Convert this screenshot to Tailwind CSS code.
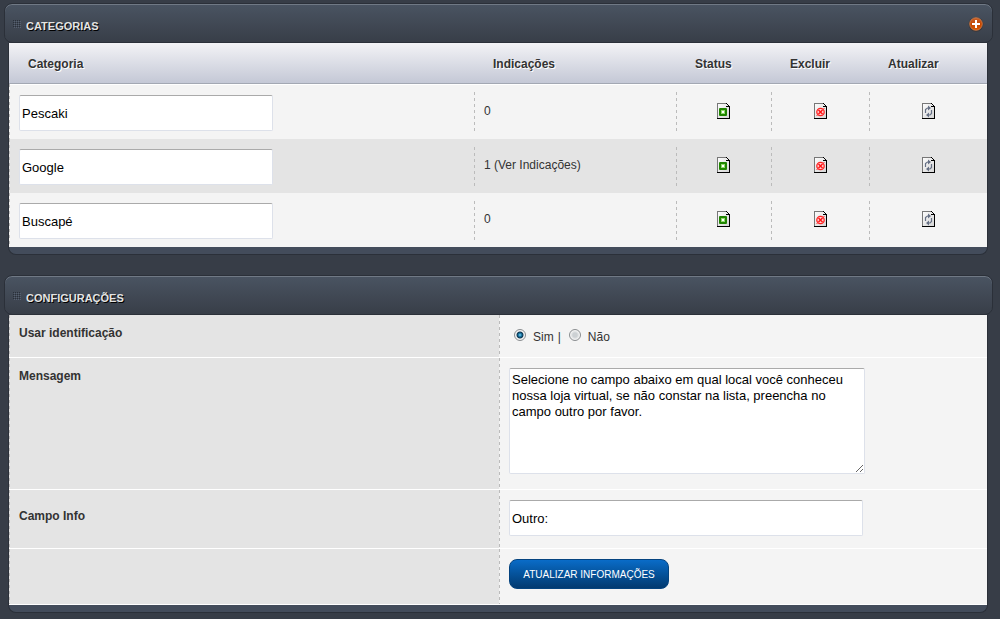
<!DOCTYPE html>
<html lang="pt-BR">
<head>
<meta charset="utf-8">
<meta name="viewport" content="width=device-width, initial-scale=1">
<title>Categorias</title>
<script src="https://cdn.jsdelivr.net/npm/@tailwindcss/browser@4"></script>
</head>
<body class="min-h-screen bg-[#373d47] pt-[3px] pr-[7px] pl-1 font-['Liberation_Sans',Arial,sans-serif] text-xs text-[#333]">

<svg class="absolute h-0 w-0" aria-hidden="true">
  <defs>
    <linearGradient id="paper" x1="0" y1="0" x2="1" y2="1"><stop offset="0" stop-color="#fff"/><stop offset="1" stop-color="#d2d2d2"/></linearGradient>
    <linearGradient id="orange" x1="0" y1="0" x2="0" y2="1"><stop offset="0" stop-color="#c8622c"/><stop offset="0.5" stop-color="#c44500"/><stop offset="1" stop-color="#d85800"/></linearGradient>
    <pattern id="dots" width="2" height="2" patternUnits="userSpaceOnUse"><rect width="1" height="1" fill="#2a303a"/><rect x="1" y="1" width="1" height="1" fill="#566070"/></pattern>
    <symbol id="page" viewBox="0 0 13 16">
      <path d="M0 0h10v1h1v1h1v1h1v13H0z" fill="url(#paper)"/>
      <path d="M0 0h9v1H1v14H0z" fill="#777"/>
      <path d="M0 15h13v1H0zM12 3h1v13h-1zM9 0h1v1H9zM10 1h1v1h-1zM11 2h1v1h-1zM9 3h3v1H9z" fill="#000"/>
    </symbol>
    <symbol id="status" viewBox="0 0 13 16">
      <use href="#page" width="13" height="16"/>
      <rect x="2" y="5" width="8" height="8" rx="1" fill="#1f8500"/>
      <rect x="4" y="7" width="4" height="4" fill="#8fd96a"/>
      <rect x="5" y="8" width="2" height="2" fill="#fff"/>
    </symbol>
    <symbol id="remove" viewBox="0 0 13 16">
      <use href="#page" width="13" height="16"/>
      <circle cx="6.500" cy="9" r="3.700" fill="#ffdada" stroke="#f22" stroke-width="1.300"/>
      <path d="M4.500 7l4 4M8.500 7l-4 4" stroke="#f11" stroke-width="1.500"/>
      <path d="M2.500 13l1.500-1.500M9 6.500L10.500 5" stroke="#f33"/>
    </symbol>
    <symbol id="refresh" viewBox="0 0 13 16">
      <use href="#page" width="13" height="16"/>
      <path d="M3.500 10V6.500l2-1.500H7M9.500 7v3.500L8 12H6" fill="none" stroke="#667085" stroke-width="1.200"/>
      <path d="M6 2.500L9 5 6 7.500zM7 9.500L4 12l3 2.500z" fill="#667085"/>
    </symbol>
  </defs>
</svg>

<section>
  <header class="flex h-10 items-center justify-between rounded-lg border border-[#2b3039] bg-linear-to-b from-[#4a5462] to-[#383e48] pt-px pr-2 pl-2 shadow-[inset_0_1px_0_#707985]">
    <div class="flex items-center gap-[5px]">
      <svg class="h-2 w-2" aria-hidden="true"><rect width="8" height="8" fill="url(#dots)"/></svg>
      <h2 class="pt-1.5 text-[11px] font-bold text-[#e4e4e4] [text-shadow:1px_1px_0_#000]">CATEGORIAS</h2>
    </div>
    <button type="button" aria-label="Adicionar categoria">
      <svg class="h-4 w-4" viewBox="0 0 16 16"><circle cx="8" cy="8.500" r="7.300" fill="#3a3638"/><circle cx="8" cy="8" r="6.300" fill="url(#orange)" stroke="#d98a58" stroke-width="0.700"/><path d="M8 4v8M4 8h8" stroke="#fff" stroke-width="2"/></svg>
    </button>
  </header>

  <div class="mr-[5px] ml-1 rounded-b-lg border border-t-0 border-[#2b3039] bg-[#434c5b] pb-[7px]">
    <table class="w-full table-fixed border-separate border-spacing-0">
      <colgroup><col><col class="w-[202px]"><col class="w-[95px]"><col class="w-[98px]"><col class="w-[118px]"></colgroup>
      <thead class="bg-linear-to-b from-[#f3f3f6] to-[#c3c7d5]">
        <tr class="h-[41px] text-left [text-shadow:1px_1px_0_#fff] *:border-b *:border-[#a3a8b3] *:pt-0.5 *:pl-[19px] *:font-bold">
          <th scope="col">Categoria</th><th scope="col">Indicações</th><th scope="col">Status</th><th scope="col">Excluir</th><th scope="col">Atualizar</th>
        </tr>
      </thead>
      <tbody>
        <tr class="h-[55px] bg-[#f4f4f4] shadow-[inset_0_1px_0_#fff] *:pb-px">
          <td class="bg-[repeating-linear-gradient(to_bottom,#bbb_0_3px,transparent_3px_6px)] bg-size-[1px_100%] bg-no-repeat pt-1 pl-2.5"><input aria-label="Categoria 1" type="text" value="Pescaki" class="block h-9 w-[254px] rounded-xs border border-[#dde1ea] border-t-[#aaa] bg-white px-0.5 pt-px text-[13px] text-black"></td>
          <td class="bg-[repeating-linear-gradient(to_bottom,#bbb_0_3px,transparent_3px_6px)] bg-size-[1px_39px] bg-no-repeat [background-position:left_center] pl-2.5">0</td>
          <td class="bg-[repeating-linear-gradient(to_bottom,#bbb_0_3px,transparent_3px_6px)] bg-size-[1px_39px] bg-no-repeat [background-position:left_center]"><button type="button" aria-label="Status" class="mx-auto block"><svg class="h-4 w-[13px]"><use href="#status"/></svg></button></td>
          <td class="bg-[repeating-linear-gradient(to_bottom,#bbb_0_3px,transparent_3px_6px)] bg-size-[1px_39px] bg-no-repeat [background-position:left_center]"><button type="button" aria-label="Excluir" class="mx-auto block"><svg class="h-4 w-[13px]"><use href="#remove"/></svg></button></td>
          <td class="bg-[repeating-linear-gradient(to_bottom,#bbb_0_3px,transparent_3px_6px)] bg-size-[1px_39px] bg-no-repeat [background-position:left_center]"><button type="button" aria-label="Atualizar" class="mx-auto block"><svg class="h-4 w-[13px]"><use href="#refresh"/></svg></button></td>
        </tr>
        <tr class="h-[54px] bg-[#e4e4e4] *:pb-0.5">
          <td class="bg-[repeating-linear-gradient(to_bottom,#bbb_0_3px,transparent_3px_6px)] bg-size-[1px_100%] bg-no-repeat pt-1 pl-2.5"><input aria-label="Categoria 2" type="text" value="Google" class="block h-9 w-[254px] rounded-xs border border-[#dde1ea] border-t-[#aaa] bg-white px-0.5 pt-px text-[13px] text-black"></td>
          <td class="bg-[repeating-linear-gradient(to_bottom,#bbb_0_3px,transparent_3px_6px)] bg-size-[1px_39px] bg-no-repeat [background-position:left_center] pl-2.5">1 <a href="#">(Ver Indicações)</a></td>
          <td class="bg-[repeating-linear-gradient(to_bottom,#bbb_0_3px,transparent_3px_6px)] bg-size-[1px_39px] bg-no-repeat [background-position:left_center]"><button type="button" aria-label="Status" class="mx-auto block"><svg class="h-4 w-[13px]"><use href="#status"/></svg></button></td>
          <td class="bg-[repeating-linear-gradient(to_bottom,#bbb_0_3px,transparent_3px_6px)] bg-size-[1px_39px] bg-no-repeat [background-position:left_center]"><button type="button" aria-label="Excluir" class="mx-auto block"><svg class="h-4 w-[13px]"><use href="#remove"/></svg></button></td>
          <td class="bg-[repeating-linear-gradient(to_bottom,#bbb_0_3px,transparent_3px_6px)] bg-size-[1px_39px] bg-no-repeat [background-position:left_center]"><button type="button" aria-label="Atualizar" class="mx-auto block"><svg class="h-4 w-[13px]"><use href="#refresh"/></svg></button></td>
        </tr>
        <tr class="h-[54px] bg-[#f4f4f4] *:pb-0.5">
          <td class="bg-[repeating-linear-gradient(to_bottom,#bbb_0_3px,transparent_3px_6px)] bg-size-[1px_100%] bg-no-repeat pt-1 pl-2.5"><input aria-label="Categoria 3" type="text" value="Buscapé" class="block h-9 w-[254px] rounded-xs border border-[#dde1ea] border-t-[#aaa] bg-white px-0.5 pt-px text-[13px] text-black"></td>
          <td class="bg-[repeating-linear-gradient(to_bottom,#bbb_0_3px,transparent_3px_6px)] bg-size-[1px_39px] bg-no-repeat [background-position:left_center] pl-2.5">0</td>
          <td class="bg-[repeating-linear-gradient(to_bottom,#bbb_0_3px,transparent_3px_6px)] bg-size-[1px_39px] bg-no-repeat [background-position:left_center]"><button type="button" aria-label="Status" class="mx-auto block"><svg class="h-4 w-[13px]"><use href="#status"/></svg></button></td>
          <td class="bg-[repeating-linear-gradient(to_bottom,#bbb_0_3px,transparent_3px_6px)] bg-size-[1px_39px] bg-no-repeat [background-position:left_center]"><button type="button" aria-label="Excluir" class="mx-auto block"><svg class="h-4 w-[13px]"><use href="#remove"/></svg></button></td>
          <td class="bg-[repeating-linear-gradient(to_bottom,#bbb_0_3px,transparent_3px_6px)] bg-size-[1px_39px] bg-no-repeat [background-position:left_center]"><button type="button" aria-label="Atualizar" class="mx-auto block"><svg class="h-4 w-[13px]"><use href="#refresh"/></svg></button></td>
        </tr>
      </tbody>
    </table>
  </div>
</section>

<section class="mt-5">
  <header class="flex h-10 items-center rounded-lg border border-[#2b3039] bg-linear-to-b from-[#4a5462] to-[#383e48] pt-px pl-2 shadow-[inset_0_1px_0_#707985]">
    <div class="flex items-center gap-[5px]">
      <svg class="h-2 w-2" aria-hidden="true"><rect width="8" height="8" fill="url(#dots)"/></svg>
      <h2 class="pt-1.5 text-[11px] font-bold text-[#e4e4e4] [text-shadow:1px_1px_0_#000]">CONFIGURAÇÕES</h2>
    </div>
  </header>

  <form class="mr-[5px] ml-1 rounded-b-lg border border-t-0 border-[#2b3039] bg-[#434c5b] pb-[7px]">
    <div class="grid h-[43px] grid-cols-[490fr_488fr] border-b border-white">
      <div id="ident" class="bg-[#e4e4e4] bg-[repeating-linear-gradient(to_bottom,#bbb_0_3px,transparent_3px_6px)] bg-size-[1px_100%] bg-no-repeat pt-2.5 pl-2.5 font-bold">Usar identificação</div>
      <div role="radiogroup" aria-labelledby="ident" class="flex items-center bg-[#f4f4f4] bg-[repeating-linear-gradient(to_bottom,#bbb_0_3px,transparent_3px_6px)] bg-size-[1px_100%] bg-no-repeat pb-0.5 pl-[15px]">
        <input id="sim" type="radio" name="ident" checked class="h-3 w-3 appearance-none rounded-full border border-[#8a8d90] bg-[#f4f4f4] checked:bg-[radial-gradient(circle_at_50%_50%,#8ad8f5_0,#1f81b0_20%,#0c3550_42%,#f4f4f4_56%)]">
        <label for="sim" class="pt-1 pl-[7px]">Sim</label><span class="px-1 pt-1">|</span>
        <input id="nao" type="radio" name="ident" class="ml-1 h-3 w-3 appearance-none rounded-full border border-[#8a8d90] bg-[radial-gradient(circle,#ccd0d3_0_30%,#f4f4f4_65%)]">
        <label for="nao" class="pt-1 pl-[7px]">Não</label>
      </div>
    </div>
    <div class="grid h-[132px] grid-cols-[490fr_488fr] border-b border-white">
      <label for="msg" class="bg-[#e4e4e4] bg-[repeating-linear-gradient(to_bottom,#bbb_0_3px,transparent_3px_6px)] bg-size-[1px_100%] bg-no-repeat pt-2.5 pl-2.5 font-bold">Mensagem</label>
      <div class="bg-[#f4f4f4] bg-[repeating-linear-gradient(to_bottom,#bbb_0_3px,transparent_3px_6px)] bg-size-[1px_100%] bg-no-repeat pt-2.5 pl-2.5">
        <textarea id="msg" class="block h-[106px] w-[356px] resize rounded-xs border border-[#dde1ea] border-t-[#aaa] bg-white px-0.5 pt-[3px] text-[13px] leading-4 text-black">Selecione no campo abaixo em qual local você conheceu nossa loja virtual, se não constar na lista, preencha no campo outro por favor.</textarea>
      </div>
    </div>
    <div class="grid h-[59px] grid-cols-[490fr_488fr] border-b border-white">
      <label for="info" class="bg-[#e4e4e4] bg-[repeating-linear-gradient(to_bottom,#bbb_0_3px,transparent_3px_6px)] bg-size-[1px_100%] bg-no-repeat pt-[18px] pl-2.5 font-bold">Campo Info</label>
      <div class="bg-[#f4f4f4] bg-[repeating-linear-gradient(to_bottom,#bbb_0_3px,transparent_3px_6px)] bg-size-[1px_100%] bg-no-repeat pt-2.5 pl-2.5">
        <input id="info" type="text" value="Outro:" class="block h-9 w-[354px] rounded-xs border border-[#dde1ea] border-t-[#aaa] bg-white px-0.5 pt-px text-[13px] text-black">
      </div>
    </div>
    <div class="grid h-14 grid-cols-[490fr_488fr] border-b border-white">
      <div class="bg-[#e4e4e4] bg-[repeating-linear-gradient(to_bottom,#bbb_0_3px,transparent_3px_6px)] bg-size-[1px_100%] bg-no-repeat"></div>
      <div class="bg-[#f4f4f4] bg-[repeating-linear-gradient(to_bottom,#bbb_0_3px,transparent_3px_6px)] bg-size-[1px_100%] bg-no-repeat pt-2.5 pl-2.5">
        <button type="submit" class="block h-[30px] w-40 rounded-lg border border-[#04437f] bg-linear-to-b from-[#0a6cc8] to-[#023a70] pt-0.5 text-[10px] whitespace-nowrap text-white">ATUALIZAR INFORMAÇÕES</button>
      </div>
    </div>
  </form>
</section>
</body>
</html>
